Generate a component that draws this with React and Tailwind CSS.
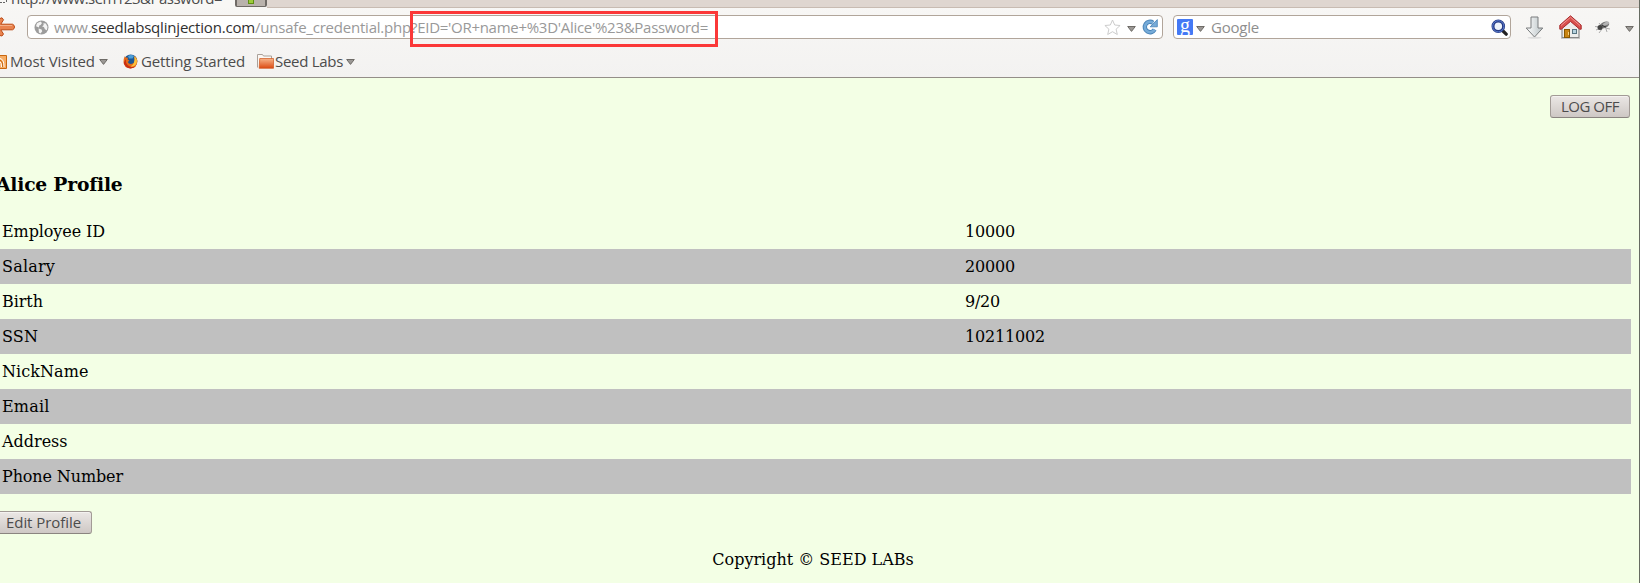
import React from 'react';

const F = "font-['Open_Sans','Noto_Sans',sans-serif]";

function Fit({ text, width, className = '', size = 15 }) {
  const ref = React.useRef(null);
  React.useLayoutEffect(() => {
    const fit = () => {
      const el = ref.current;
      if (!el || !text) return;
      el.style.letterSpacing = '0px';
      const w = el.getBoundingClientRect().width;
      el.style.letterSpacing = (width - w) / text.length + 'px';
    };
    fit();
    if (document.fonts) document.fonts.ready.then(fit);
  }, [text, width]);
  return (
    <span ref={ref} className={'inline-block shrink-0 justify-self-start whitespace-pre ' + className} style={{ fontSize: size }}>
      {text}
    </span>
  );
}

function Caret({ className = '' }) {
  return (
    <svg className={'h-[6px] w-[9px] shrink-0 ' + className} viewBox="0 0 9 6">
      <path d="M.7.5h7.6L4.5 5.4z" fill="#9b9895" stroke="#6e6b67" />
    </svg>
  );
}

function Globe() {
  return (
    <svg className="h-[15px] w-[15px] shrink-0" viewBox="0 0 15 15">
      <circle cx="7.5" cy="7.5" r="7" fill="#9c9c9c" />
      <path d="M3 3.2 6.5 1.6 8 3 6.6 5 5.2 5.6 5 7.4 2 6.2zM9.4 3.2l2.4.4 1.7 3.1-.6 3.6-2-1-1-2.3-1.8-.5 1.6-1.6zM4.6 8.6l3 1 .6 1.6-1.6 2.4-1.7-1.2z" fill="#f4f4f4" />
    </svg>
  );
}

function Firefox() {
  return (
    <svg className="h-[15px] w-[15px] shrink-0" viewBox="0 0 15 15">
      <circle cx="7.7" cy="7" r="6.6" fill="#1e5793" />
      <path d="M5 2Q8 .2 11 2L9.5 4.4 6 4.6z" fill="#4b9ed8" />
      <path d="M1.7 2.2 2.8 3.6 5 3.8 4.5 5.5 6.4 6.6 4.8 7.9Q5.7 10.4 9 9.8 12.5 8.7 11.8 4.2L11 2.1Q14.4 3.9 14.4 7.6 14 14.2 7.4 14.5.8 14 .5 7.8.4 4.8 1.7 2.2z" fill="#e66b19" />
      <path d="M11.3 2.3Q15 5 13.5 9.6 11.5 13.4 7.3 12.6 12.4 10.4 11.3 2.3z" fill="#fbc13a" />
      <path d="M.7 9Q2.4 14 7.5 14.5 11 14.4 13 11.8 8.2 14.4 4.8 11.2 2.5 9 2.8 5z" fill="#c92f13" />
    </svg>
  );
}

function Folder() {
  return (
    <svg className="h-[15px] w-[17px] shrink-0" viewBox="0 0 17 15">
      <defs><linearGradient id="folder" x2="0" y2="1"><stop stopColor="#f7b58a" /><stop offset="1" stopColor="#dc4a12" /></linearGradient></defs>
      <path d="M.5 13.5V.5h5l1 1.5h8v3" fill="#fbf7f3" stroke="#aaa19a" />
      <path d="M2.7 4.5h13.8v9.8H2.2z" fill="url(#folder)" stroke="#d0551d" strokeWidth=".7" />
    </svg>
  );
}

function Home() {
  return (
    <svg className="h-[24px] w-[23px] shrink-0" viewBox="0 0 23 24">
      <path d="M3 11 11.5 4 20 11v11.5H3z" fill="#eeeeec" stroke="#777" />
      <path d="M2 23h19" stroke="#999" />
      <rect x="5.5" y="14.5" width="5" height="8" fill="#c88411" stroke="#875600" />
      <path d="M9.5 17v3" stroke="#f5cf7b" />
      <rect x="13.5" y="14.5" width="4" height="4" fill="#b6d2de" stroke="#587582" />
      <path d="M11.5.8 22.2 10.2v4h-1.5L11.5 6.4 2.3 14.2H.8v-4z" fill="#d9504d" stroke="#a82c2e" strokeLinejoin="round" />
      <path d="M2 10.5 11.5 2.3 21 10.5" fill="none" stroke="#ef9693" />
    </svg>
  );
}

const rows = [
  ['Employee ID', 103, '10000', 50],
  ['Salary', 53, '20000', 50],
  ['Birth', 41, '9/20', 35],
  ['SSN', 36, '10211002', 80],
  ['NickName', 86.5, '', 0],
  ['Email', 47.5, '', 0],
  ['Address', 65.5, '', 0],
  ['Phone Number', 121, '', 0],
];

const buttonClass = 'flex h-[23px] items-center rounded-[3px] border border-[#a29b96] border-b-[#8a8480] bg-linear-to-b from-[#ebe7e5] to-[#cec8c5] text-[#4c4c4c] shadow-[inset_0_1px_0_#f4f2f0]';

export default function App() {
  return (
    <div className="flex h-[583px] w-[1640px] overflow-hidden bg-[#f3ffe5]">
      <div className="flex min-w-0 grow flex-col">
        <header className={'relative flex h-[78px] shrink-0 flex-col border-b border-[#948e88] bg-linear-to-b from-[#f8f7f5] to-[#f3f2f1] ' + F}>
          <div className="flex h-[8px] shrink-0 overflow-hidden">
            <div className="flex h-full w-[235px] bg-[#f8f7f5] text-[#4c4c4c]">
              <svg className="h-[4px] w-[11px] shrink-0" viewBox="0 0 11 4"><path d="M0 2.5h5M6.5 0v2" fill="none" stroke="#666" strokeDasharray="2 1" /></svg>
              <Fit text="http://www.sem123&Password=" width={211} className="-mt-[12px] h-[20px] leading-[20px]" />
            </div>
            <div className="flex h-[7px] w-[32px] justify-center rounded-b-[2px] border-x-2 border-b border-[#6f6a66] bg-[#b9b2ac]">
              <div className="h-[4px] w-[6px] border-x border-b border-[#5f8f12] bg-[#9ccb3b]" />
            </div>
            <div className="h-full grow border-b border-[#c8bbb2] bg-[#dfd6d0]" />
          </div>
          <div className="flex h-[38px] shrink-0 items-center">
            <svg className="h-[20px] w-[15px] shrink-0" viewBox="0 0 15 20">
              <path d="M0 1.5 2 .8 3.5 2.8.8 7.2H12.5Q14.5 8 14.5 10t-2 2.8H.8L3.5 17 2 19 0 18.5" fill="#e98450" stroke="#bd4a15" />
              <path d="M0 8.5h12" stroke="#f4b08a" />
            </svg>
            <div className="ml-[12px] flex h-[24px] w-[1136px] shrink-0 items-center rounded-[4px] border border-[#b1a59a] bg-white pl-[6px] pr-[4px] leading-[20px] text-[#999]">
              <Globe />
              <Fit text="www." width={37} className="ml-[5px]" />
              <Fit text="seedlabsqlinjection.com" width={164} className="text-[#303030]" />
              <Fit text="/unsafe_credential.php" width={156} />
              <Fit text="?EID='OR+name+%3D'Alice'%23&Password=" width={297} />
              <svg className="ml-auto h-[17px] w-[17px] shrink-0" viewBox="0 0 17 17"><path d="m8.5 1 2.2 5 5.4.5-4 3.7 1.2 5.3-4.8-2.8-4.8 2.8 1.2-5.3-4-3.7 5.4-.5z" fill="#fff" stroke="#ccc" /></svg>
              <Caret className="ml-[6px] mt-[3px]" />
              <svg className="ml-[6px] h-[16px] w-[16px] shrink-0" viewBox="0 0 16 16">
                <path d="M12.6 10.5A5.2 5.2 0 1 1 11 3.7" fill="none" stroke="#4680b5" strokeWidth="4.4" />
                <path d="M12.6 10.5A5.2 5.2 0 1 1 11 3.7" fill="none" stroke="#76abd8" strokeWidth="2.6" />
                <path d="M15.3.6v7.2H8.2z" fill="#76abd8" stroke="#4680b5" strokeWidth=".8" />
              </svg>
            </div>
            <div className="ml-[10px] flex h-[24px] w-[338px] shrink-0 items-center rounded-[4px] border border-[#b1a59a] bg-white pl-[3px] pr-[2px] leading-[20px] text-[#8e8e8e]">
              <span className="flex h-[16px] w-[16px] shrink-0 items-center justify-center rounded-[1px] bg-[#4479f5] font-['Liberation_Serif',serif] text-[20px] leading-[10px] text-white"><span className="-mt-[5px]">g</span></span>
              <Caret className="ml-[3px] mt-[3px]" />
              <Fit text="Google" width={48} className="ml-[6px]" />
              <svg className="ml-auto h-[17px] w-[17px] shrink-0" viewBox="0 0 17 17">
                <path d="m11.5 11.5 3.7 3.7" stroke="#222" strokeWidth="3.2" strokeLinecap="round" />
                <circle cx="7.3" cy="7.3" r="5.3" fill="#eef4fb" stroke="#263b85" strokeWidth="3" />
                <circle cx="7.3" cy="7.3" r="5.6" fill="none" stroke="#5d7fd0" />
              </svg>
            </div>
            <svg className="ml-[14px] h-[23px] w-[19px] shrink-0" viewBox="0 0 19 23">
              <defs><linearGradient id="down"><stop stopColor="#fff" /><stop offset="1" stopColor="#b8c1c4" /></linearGradient></defs>
              <ellipse cx="9.5" cy="21.8" rx="7" ry="1" fill="#ddd" />
              <path d="M6 1h7v11h4.8L9.5 21 1.2 12H6z" fill="url(#down)" stroke="#7a7d7e" />
            </svg>
            <div className="ml-[15px] flex shrink-0"><Home /></div>
            <svg className="ml-[12px] h-[14px] w-[17px] shrink-0" viewBox="0 0 17 14">
              <path d="M1 6.5 6 7M2 10l5-2M5 13l3-4M12 9l1 3M11 8l5 1M5 3l3 4" stroke="#999" strokeWidth=".8" />
              <ellipse cx="10.5" cy="5" rx="5" ry="3" fill="#777" transform="rotate(-24 10.5 5)" />
              <ellipse cx="12" cy="3.6" rx="3.4" ry="1.6" fill="#b4b4b4" transform="rotate(-24 12 3.6)" />
              <circle cx="6" cy="7.6" r="2.5" fill="#444" />
              <path d="M8 5.5 12 7" stroke="#333" />
            </svg>
            <Caret className="ml-[14px] mt-[3px]" />
          </div>
          <div className="flex h-[30px] items-center leading-[20px] text-[#4c4c4c]">
            <svg className="mt-[1px] h-[14px] w-[7px] shrink-0" viewBox="0 0 7 14"><path d="M0 .5h6.5v13H0" fill="#f7ad65" stroke="#c86710" /><path d="M0 3.5Q4 4 4 12M0 7q1.5 0 1.5 5" fill="none" stroke="#fff" /><path d="M0 5.3q2.7 0 2.7 6.7" fill="none" stroke="#c86710" /></svg>
            <Fit text="Most Visited" width={85} className="ml-[3px]" />
            <Caret className="ml-[4px] mt-[2px]" />
            <div className="ml-[15px] mt-[1px] flex"><Firefox /></div>
            <Fit text="Getting Started" width={104} className="ml-[3px]" />
            <div className="ml-[12px] mt-[1px] flex"><Folder /></div>
            <Fit text="Seed Labs" width={68} className="ml-[1px]" />
            <Caret className="ml-[3px] mt-[2px]" />
          </div>
          <div className="absolute left-[410px] top-[11px] h-[36px] w-[308px] border-3 border-[#fb3838]" />
        </header>
        <main className="flex grow flex-col font-['DejaVu_Serif',serif] text-[16px] text-black">
          <div className="flex justify-end pr-[9px] pt-[17px]">
            <button className={buttonClass + ' w-[80px] pl-[10px] ' + F}><Fit text="LOG OFF" width={58} /></button>
          </div>
          <h3 className="-ml-[4px] mt-[54px] h-[24px] text-[18.72px] leading-[24px] font-bold">
            <Fit text="Alice Profile" width={125} size={18.72} />
          </h3>
          <div className="mr-[8px] mt-[18px] shrink-0">
            {rows.map(([label, labelWidth, value, valueWidth], i) => (
              <div key={label} className={'grid h-[35px] grid-cols-[963px_1fr] items-center pl-[2px] ' + (i % 2 ? 'bg-[#c0c0c0]' : '')}>
                <Fit text={label} width={labelWidth} size={16} />
                <Fit text={value} width={valueWidth} size={16} />
              </div>
            ))}
          </div>
          <button className={buttonClass + ' mt-[17px] w-[92px] shrink-0 rounded-l-none border-l-0 pl-[6px] ' + F}><Fit text="Edit Profile" width={75} /></button>
          <p className="mt-[16px] w-[1626px] text-center leading-[20px]">Copyright © SEED LABs</p>
        </main>
      </div>
      <div className="w-px shrink-0 bg-[#666b62]" />
    </div>
  );
}
